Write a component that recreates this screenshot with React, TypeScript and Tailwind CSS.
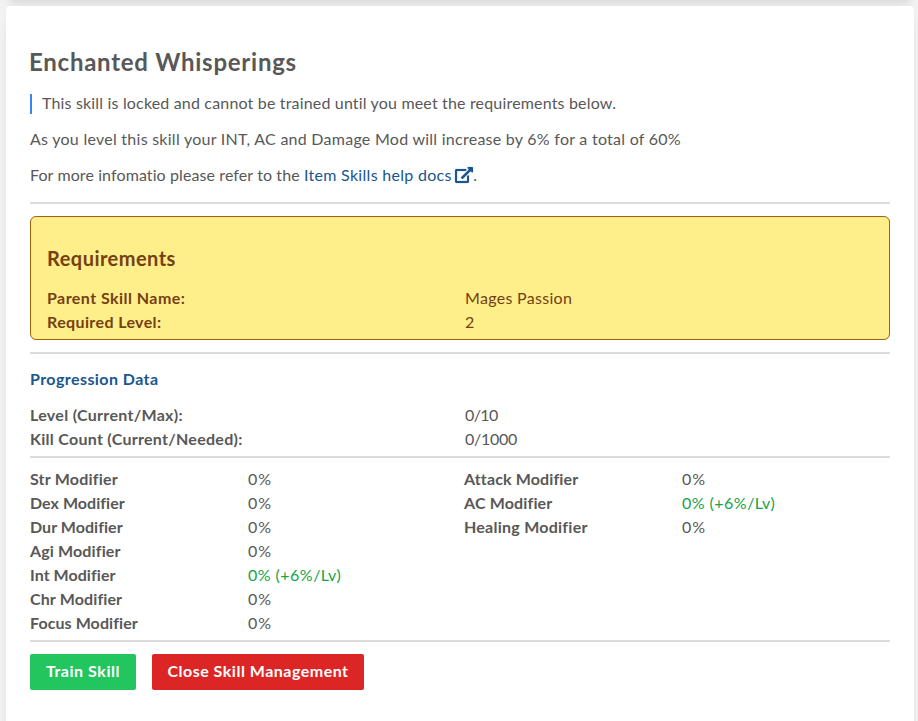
import type { ReactNode } from "react";

type Modifier = { name: string; value: string; active?: boolean; track: string };

const statModifiers: Modifier[] = [
  { name: "Str Modifier", value: "0%", track: "tracking-[0.2px]" },
  { name: "Dex Modifier", value: "0%", track: "tracking-[0.05px]" },
  { name: "Dur Modifier", value: "0%", track: "tracking-[0.05px]" },
  { name: "Agi Modifier", value: "0%", track: "tracking-[0.13px]" },
  { name: "Int Modifier", value: "0% (+6%/Lv)", active: true, track: "tracking-[0.05px]" },
  { name: "Chr Modifier", value: "0%", track: "tracking-[0.13px]" },
  { name: "Focus Modifier", value: "0%", track: "tracking-[0.08px]" },
];

const otherModifiers: Modifier[] = [
  { name: "Attack Modifier", value: "0%", track: "tracking-[0.13px]" },
  { name: "AC Modifier", value: "0% (+6%/Lv)", active: true, track: "tracking-[0.15px]" },
  { name: "Healing Modifier", value: "0%", track: "tracking-[0.25px]" },
];

function Divider() {
  return <div className="h-0.5 bg-[#dcdcdc]" />;
}

function Row({ label, children, track }: { label: string; children: ReactNode; track: string }) {
  return (
    <>
      <dt className={`font-bold ${track}`}>{label}</dt>
      <dd>{children}</dd>
    </>
  );
}

function ModifierList({ items }: { items: Modifier[] }) {
  return (
    <dl className="grid grid-cols-[218px_1fr] content-start">
      {items.map((m) => (
        <Row key={m.name} label={m.name} track={m.track}>
          <span className={m.active ? "tracking-[0.47px] text-[#16a34a]" : "tracking-[1px]"}>{m.value}</span>
        </Row>
      ))}
    </dl>
  );
}

function ExternalIcon() {
  return (
    <svg
      viewBox="0 0 576 512"
      className="ml-[3.5px] inline-block h-4 w-[18px] overflow-visible align-[-2px]"
      fill="currentColor"
      stroke="currentColor"
      strokeWidth="6"
    >
      <path d="M576 24v127.984c0 21.461-25.96 31.98-40.971 16.971l-35.707-35.709-243.523 243.523c-9.373 9.373-24.568 9.373-33.941 0l-22.627-22.627c-9.373-9.373-9.373-24.569 0-33.941L442.756 76.676l-35.703-35.705C391.982 25.9 402.656 0 424.024 0H552c13.255 0 24 10.745 24 24zM407.029 270.794l-16 16A23.999 23.999 0 0 0 384 303.765V448H64V128h264a24.003 24.003 0 0 0 16.97-7.029l16-16C376.089 89.851 365.381 64 344 64H48C21.49 64 0 85.49 0 112v352c0 26.51 21.49 48 48 48h352c26.51 0 48-21.49 48-48V287.764c0-21.382-25.852-32.09-40.971-16.97z" />
    </svg>
  );
}

export default function App() {
  return (
    <div className="flex h-[721px] flex-col overflow-hidden bg-[#f4f4f4] pr-1 pl-1.5 font-['Lato','Open_Sans',sans-serif] text-base leading-6 text-[#585858]">
      <div className="h-1.5 shrink-0">
        <div className="-mt-4 h-4 rounded bg-white shadow-lg" />
      </div>
      <main className="h-[760px] shrink-0 rounded bg-white p-6 pt-10 shadow-lg">
        <h2 className="-ml-px text-2xl leading-8 font-bold tracking-[0.75px]">Enchanted Whisperings</h2>
        <p className="mt-4 border-l-2 border-[#3b82f6] pb-0.5 pl-2.5 leading-[18px] tracking-[0.17px]">
          This skill is locked and cannot be trained until you meet the requirements below.
        </p>
        <p className="mt-[13px] tracking-[0.26px]">
          As you level this skill your INT, AC and Damage Mod will increase by 6% for a total of 60%
        </p>
        <p className="mt-3 mb-[15px] h-6 tracking-[0.1px]">
          For more infomatio please refer to the{" "}
          <a className="tracking-[0.3px] text-[#1a568e]">
            Item Skills help docs
            <ExternalIcon />
          </a>
          .
        </p>
        <Divider />
        <section className="my-3 h-[124px] rounded-md border border-[#a16207] bg-[#feef8b] px-4 pt-[27px] text-[#754012]">
          <h3 className="text-xl leading-7 font-bold tracking-[0.47px]">Requirements</h3>
          <dl className="mt-3.5 grid grid-cols-[418px_1fr]">
            <Row label="Parent Skill Name:" track="tracking-[0.45px]">
              <span className="tracking-[0.3px]">Mages Passion</span>
            </Row>
            <Row label="Required Level:" track="tracking-[0.38px]">2</Row>
          </dl>
        </section>
        <Divider />
        <h4 className="mt-[13px] font-bold tracking-[0.43px] text-[#1a568e]">Progression Data</h4>
        <dl className="mt-3 mb-[5px] grid grid-cols-[435px_1fr]">
          <Row label="Level (Current/Max):" track="tracking-[0.3px]">
            <span className="tracking-[-0.6px]">0/10</span>
          </Row>
          <Row label="Kill Count (Current/Needed):" track="tracking-[0.28px]">
            <span className="tracking-[-0.25px]">0/1000</span>
          </Row>
        </dl>
        <Divider />
        <div className="mt-[9px] mb-[5px] grid grid-cols-[434px_1fr]">
          <ModifierList items={statModifiers} />
          <ModifierList items={otherModifiers} />
        </div>
        <Divider />
        <div className="mt-3 flex gap-4 font-bold text-white">
          <button className="h-9 w-[106px] rounded-xs bg-[#22c55e] pb-0.5 tracking-[0.55px]">Train Skill</button>
          <button className="h-9 w-[212px] rounded-xs bg-[#dc2626] pb-0.5 tracking-[0.5px]">Close Skill Management</button>
        </div>
      </main>
    </div>
  );
}
